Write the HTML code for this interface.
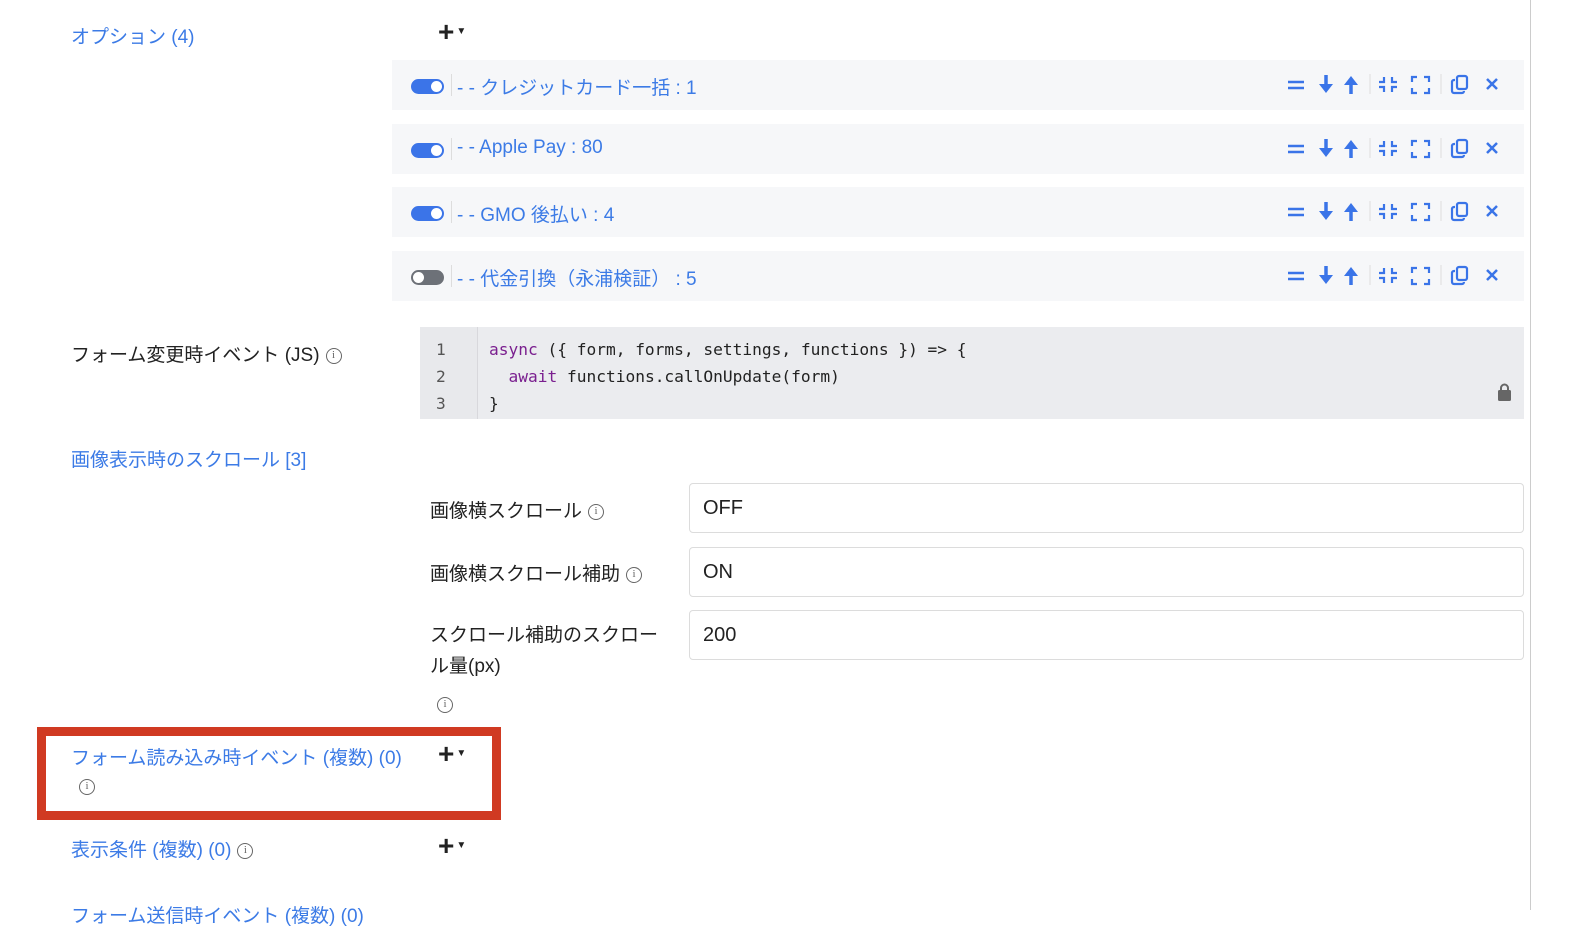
<!DOCTYPE html>
<html><head><meta charset="utf-8"><style>
*{box-sizing:border-box;margin:0;padding:0}
body{width:1580px;height:910px;background:#fff;position:relative;overflow:hidden;font-family:"Liberation Sans","Noto Sans CJK JP",sans-serif;font-size:19px;color:#222}
.a{position:absolute;white-space:nowrap}
.blue{color:#3c7be6}
.row{position:absolute;left:392px;width:1132px;height:50px;background:#f6f7f9}
.tg{position:absolute;left:19px;top:19px;width:33px;height:15px;border-radius:8px;background:#3b74e8}
.tg:after{content:"";position:absolute;right:2px;top:2px;width:11px;height:11px;border-radius:50%;background:#fff}
.tg.off{background:#6d7178}.tg.off:after{right:auto;left:2px}
.vs{position:absolute;left:59px;top:14px;width:1px;height:22px;background:#ddd}
.lbl{position:absolute;left:65px;top:13px;color:#3c7be6;font-size:19px}
.plus{font-size:28px;color:#222;font-weight:bold}
.plus span{font-size:10px;vertical-align:7px;margin-left:2px}
.info{display:inline-block;width:16px;height:16px;border:1.5px solid #666;border-radius:50%;font-size:11px;line-height:13px;text-align:center;color:#666;font-family:"Liberation Serif",serif;vertical-align:middle;margin-left:6px}
.inp{position:absolute;left:689px;width:835px;height:50px;border:1px solid #dcdcdc;border-radius:4px;padding:13px 13px;font-size:20px;color:#222}
.code{font-family:"DejaVu Sans Mono","Liberation Mono",monospace;font-size:16.2px}
</style></head><body>
<div style="position:absolute;left:1530px;top:0;width:1px;height:910px;background:#ccc"></div>

<div class="a blue" style="left:71px;top:22px">オプション (4)</div>
<div class="a plus" style="left:438px;top:16px">+<span>▼</span></div>

<div class="row" style="top:60px"><div class="tg"></div><div class="vs"></div><div class="lbl">- - クレジットカード一括 : 1</div></div>
<div class="row" style="top:124px"><div class="tg"></div><div class="vs"></div><div class="lbl">- - Apple Pay : 80</div></div>
<div class="row" style="top:187px"><div class="tg"></div><div class="vs"></div><div class="lbl">- - GMO 後払い : 4</div></div>
<div class="row" style="top:251px"><div class="tg off"></div><div class="vs"></div><div class="lbl">- - 代金引換（永浦検証） : 5</div></div>

<svg class="a" style="left:1280px;top:60px" width="230" height="250" fill="none" stroke="#3a74e8" stroke-width="2.2">
<g id="ic">
<path d="M8 22h16M8 28h16" stroke-width="2.5"/>
<path d="M46 15v12" stroke-width="3.5"/><path d="M39 24h14l-7 9z" fill="#3a74e8" stroke="none"/>
<path d="M71 34V22" stroke-width="3.5"/><path d="M64 25h14l-7-9z" fill="#3a74e8" stroke="none"/>
<path d="M90 14v20" stroke="#ddd" stroke-width="1"/>
<path d="M104 17v5h-5M112 17v5h5M104 32v-5h-5M112 32v-5h5"/>
<path d="M132 22v-5h5M149 22v-5h-5M132 28v5h5M149 28v5h-5"/>
<path d="M161 14v20" stroke="#ddd" stroke-width="1"/>
<rect x="177" y="16" width="10" height="13" rx="2"/><path d="M175 20h-1a2 2 0 0 0-2 2v9a2 2 0 0 0 2 2h8a2 2 0 0 0 2-2"/>
<path d="M207 19l10 10M217 19l-10 10" stroke-width="2.5"/>
</g>
<use href="#ic" y="64"/><use href="#ic" y="127"/><use href="#ic" y="191"/>
</svg>

<div class="a" style="left:71px;top:340px">フォーム変更時イベント (JS)<span class="info">i</span></div>
<div style="position:absolute;left:420px;top:327px;width:1104px;height:92px;background:#ebecef"></div>
<div style="position:absolute;left:420px;top:327px;width:58px;height:92px;background:#e8e9ec;border-right:1px solid #d8d8dc"></div>
<div class="a code" style="left:436px;top:336px;color:#555;line-height:27px">1<br>2<br>3</div>
<div class="a code" style="left:489px;top:336px;line-height:27px;color:#222;white-space:pre"><span style="color:#7a1f8f">async</span> ({ form, forms, settings, functions }) =&gt; {
  <span style="color:#7a1f8f">await</span> functions.callOnUpdate(form)
}</div>
<svg class="a" style="left:1496px;top:382px" width="18" height="20"><rect x="2" y="8" width="13" height="11" rx="1.5" fill="#666"/><path d="M5 9V6a3.5 3.5 0 0 1 7 0v3" stroke="#666" stroke-width="2" fill="none"/></svg>

<div class="a blue" style="left:71px;top:445px">画像表示時のスクロール [3]</div>

<div class="a" style="left:430px;top:496px">画像横スクロール<span class="info">i</span></div>
<div class="inp" style="top:483px">OFF</div>
<div class="a" style="left:430px;top:559px">画像横スクロール補助<span class="info">i</span></div>
<div class="inp" style="top:547px">ON</div>
<div class="a" style="left:430px;top:620px;line-height:31px">スクロール補助のスクロー<br>ル量(px)</div>
<div class="a" style="left:431px;top:694px"><span class="info">i</span></div>
<div class="inp" style="top:610px">200</div>

<div style="position:absolute;left:37px;top:727px;width:464px;height:93px;border:9px solid #d03a22"></div>
<div class="a blue" style="left:71px;top:743px">フォーム読み込み時イベント (複数) (0)</div>
<div class="a" style="left:73px;top:776px"><span class="info">i</span></div>
<div class="a plus" style="left:438px;top:738px">+<span>▼</span></div>

<div class="a blue" style="left:71px;top:835px">表示条件 (複数) (0)<span class="info">i</span></div>
<div class="a plus" style="left:438px;top:830px">+<span>▼</span></div>
<div class="a blue" style="left:71px;top:901px">フォーム送信時イベント (複数) (0)</div>
</body></html>
